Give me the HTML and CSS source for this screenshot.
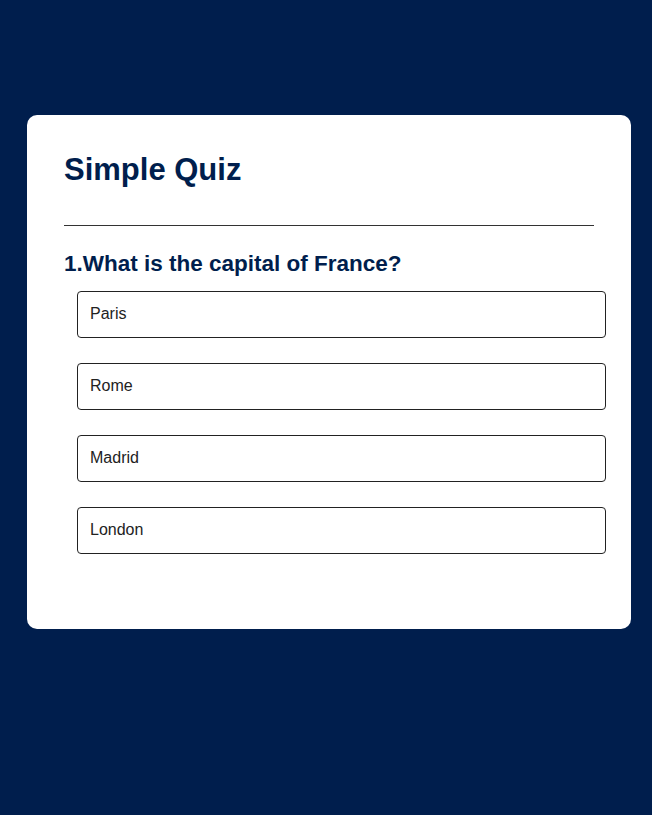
FILE: index.html
```html
<!DOCTYPE html>
<html>
<head>
<meta charset="utf-8">
<link rel="stylesheet" href="styles.css">
</head>
<body>
<div class="app">
  <h1 class="title">Simple Quiz</h1>
  <div class="quiz">
    <h2 class="question">1.What is the capital of France?</h2>
    <div class="answers">
      <button class="btn">Paris</button>
      <button class="btn">Rome</button>
      <button class="btn">Madrid</button>
      <button class="btn">London</button>
    </div>
  </div>
</div>
</body>
</html>
```

FILE: styles.css
```css
* { box-sizing: border-box; }
body {
  margin: 0;
  background: #001e4d;
  font-family: "Liberation Sans", Arial, sans-serif;
}
.app {
  background: #fff;
  width: 604px;
  margin: 115px 0 0 27px;
  border-radius: 10px;
  padding: 37px 37px 75px;
}
.title {
  margin: 0;
  font-size: 31px;
  line-height: 36px;
  font-weight: 700;
  color: #001e4d;
  padding-bottom: 37px;
  border-bottom: 1px solid #333;
}
.quiz {
  padding-top: 24px;
}
.question {
  margin: 0 0 13px;
  font-size: 22.5px;
  line-height: 28px;
  font-weight: 700;
  color: #001e4d;
}
.answers {
  display: flex;
  flex-direction: column;
  gap: 25px;
  padding-left: 13px;
}
.btn {
  display: block;
  width: 529px;
  height: 47px;
  background: #fff;
  color: #222;
  border: 1px solid #222;
  border-radius: 4px;
  padding: 0 12px 1px;
  text-align: left;
  font-family: "Liberation Sans", Arial, sans-serif;
  font-size: 16px;
  font-weight: 400;
  margin: 0;
}
```
